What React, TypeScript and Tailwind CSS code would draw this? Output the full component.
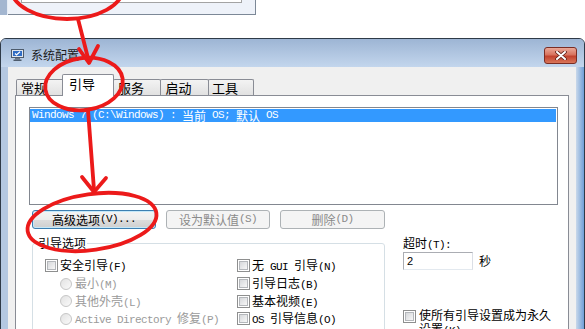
import React from 'react';

const cjk = /[\u3000-\u303f\u4e00-\u9fff\uff00-\uffef]/;

// SimSun-like text: CJK at 12px, latin as 6px-wide mono
const Txt: React.FC<{ s: string }> = ({ s }) => (
  <>
    {s
      .split(/([\u3000-\u303f\u4e00-\u9fff\uff00-\uffef]+)/)
      .filter(Boolean)
      .map((p, i) =>
        cjk.test(p) ? (
          <span key={i}>{p}</span>
        ) : (
          <span key={i} className="font-['Liberation_Mono',monospace] text-[11px] tracking-[-0.6px] leading-none whitespace-pre">
            {p}
          </span>
        )
      )}
  </>
);

const CheckBox: React.FC = () => (
  <span className="flex items-center justify-center w-[13px] h-[13px] shrink-0 border border-[#8e8f8f] bg-white">
    <span className="w-[9px] h-[9px] border border-[#b4b7bb] bg-gradient-to-br from-[#d6d8db] to-[#f7f7f7]" />
  </span>
);

const Radio: React.FC = () => (
  <span className="w-[12px] h-[12px] shrink-0 rounded-full border border-[#c6c6c6] bg-gradient-to-br from-[#e2e2e2] to-[#fafafa]" />
);

const tabs = [
  { label: '常规', w: 'w-[48px]', active: false },
  { label: '引导', w: 'w-[52px]', active: true },
  { label: '服务', w: 'w-[48px]', active: false },
  { label: '启动', w: 'w-[49px]', active: false },
  { label: '工具', w: 'w-[46px]', active: false },
];

export default function App() {
  return (
    <div className="relative w-[585px] h-[329px] overflow-hidden bg-white font-['Noto_Sans_CJK_SC',sans-serif] text-[12px] text-black">
      {/* fragment of the previous dialog */}
      <div className="flex h-[15px]">
        <div className="w-[8px] bg-[#a3b6d0] border-r border-[#e6ecf5]" />
        <div className="w-[248px] bg-[#eef2f9] border-b border-r border-[#7c8897]">
          <div className="ml-[13px] w-[221px] h-[3px] bg-white border-x border-b border-[#a3a3a3]" />
        </div>
      </div>

      {/* System configuration window */}
      <div className="mt-[23px] w-[585px] rounded-t-[6px] border border-[#2e3a48] bg-[#b7cbe4] overflow-hidden">
        <div className="flex items-center h-[28px] pt-[4px] pl-[10px] pr-[7px] bg-[linear-gradient(#9db5d4,#c3d6ed)]">
          <svg width="13" height="12" viewBox="0 0 13 12" className="shrink-0">
            <rect x="0.5" y="0.5" width="12" height="8" fill="#dfe6ef" stroke="#4d5b6c" />
            <rect x="2" y="2" width="9" height="5" fill="#2f6cc4" />
            <path d="M4 4.5 L5.5 6 L9 2.8" stroke="#fff" strokeWidth="1.2" fill="none" />
            <rect x="4" y="9" width="5" height="1.5" fill="#6b7786" />
            <rect x="2.5" y="10.5" width="8" height="1.5" fill="#4d5b6c" />
          </svg>
          <span className="ml-[7px] text-[12px] leading-[16px] text-[#1b1b1b]">系统配置</span>
          <div className="ml-auto self-start mt-[4px] flex items-center justify-center w-[33px] h-[17px] rounded-[3px] border border-[#7a2d24] bg-[linear-gradient(#eaa898_0%,#d8735e_45%,#c2422e_55%,#d9765a_100%)]">
            <svg width="12" height="9" viewBox="0 0 12 9">
              <path d="M2 1 L10 8 M10 1 L2 8" stroke="#5e1f16" strokeWidth="3.6" strokeLinecap="round" />
              <path d="M2 1 L10 8 M10 1 L2 8" stroke="#ffffff" strokeWidth="2" strokeLinecap="round" />
            </svg>
          </div>
        </div>

        <div className="flex h-[270px]">
          <div className="w-[7px] bg-[#b4c8e2]" />
          <div className="w-[568px] bg-[#f0f0f0] pt-[7px] px-[7px]">
            {/* tab strip */}
            <div className="flex items-end h-[21px] pl-[1px]">
              {tabs.map((t, i) =>
                t.active ? (
                  <div
                    key={t.label}
                    className={`relative z-10 ${t.w} h-[22px] -mb-px -ml-[2px] flex items-center justify-center pr-[12px] pb-[4px] border-x border-t border-[#898c95] rounded-t-[2px] bg-white text-[13px]`}
                  >
                    {t.label}
                  </div>
                ) : (
                  <div
                    key={t.label}
                    className={`${t.w} h-[16px] ${i > 0 ? '-ml-px' : ''} flex items-center justify-center pr-[12px] border-x border-t border-[#898c95] rounded-t-[2px] bg-[linear-gradient(#f3f3f3,#e1e1e1)] text-[13px]`}
                  >
                    {t.label}
                  </div>
                )
              )}
            </div>

            {/* tab page */}
            <div className="h-[240px] border border-[#898c95] bg-white pt-[11px]">
              <div className="ml-[13px] mr-[10px] h-[98px] border border-[#828790] bg-white pt-px pr-px">
                <div className="flex items-center h-[13px] pl-[2px] bg-[#3399ff] text-white leading-[13px]">
                  <Txt s="Windows 7 (C:\Windows) : 当前 OS; 默认 OS" />
                </div>
              </div>

              <div className="flex mt-[5px] pl-[16px]">
                <div className="flex items-center justify-center w-[124px] h-[19px] rounded-[3px] border border-[#3c7fb1] shadow-[inset_0_0_0_1px_#c4e8f9] bg-[linear-gradient(#f4f4f4_0%,#ececec_50%,#dddddd_51%,#cfcfcf_100%)] leading-[17px]">
                  <Txt s="高级选项(V)..." />
                </div>
                <div className="ml-[10px] flex items-center justify-center w-[104px] h-[19px] rounded-[3px] border border-[#adb2b5] bg-[#f4f4f4] text-[#8a8a8a] leading-[17px]">
                  <Txt s="设为默认值(S)" />
                </div>
                <div className="ml-[10px] flex items-center justify-center w-[105px] h-[19px] rounded-[3px] border border-[#adb2b5] bg-[#f4f4f4] text-[#8a8a8a] leading-[17px]">
                  <Txt s="删除(D)" />
                </div>
              </div>

              <div className="flex mt-[6px] pl-[16px]">
                <fieldset className="w-[353px] h-[110px] border border-[#d5dfe5] rounded-[3px]">
                  <legend className="ml-[4px] px-[1px] leading-[16px]">引导选项</legend>
                  <div className="flex pt-[6px]">
                    <div className="w-[204px] pl-[12px]">
                      <div className="flex items-center h-[17.7px] gap-[2px]">
                        <CheckBox />
                        <span className="leading-[14px]"><Txt s="安全引导(F)" /></span>
                      </div>
                      <div className="flex items-center h-[17.7px] gap-[3px] pl-[15px] text-[#9a9a9a]">
                        <Radio />
                        <span className="leading-[14px]"><Txt s="最小(M)" /></span>
                      </div>
                      <div className="flex items-center h-[17.7px] gap-[3px] pl-[15px] text-[#9a9a9a]">
                        <Radio />
                        <span className="leading-[14px]"><Txt s="其他外壳(L)" /></span>
                      </div>
                      <div className="flex items-center h-[17.7px] gap-[3px] pl-[15px] text-[#9a9a9a]">
                        <Radio />
                        <span className="leading-[14px]"><Txt s="Active Directory 修复(P)" /></span>
                      </div>
                    </div>
                    <div>
                      {['无 GUI 引导(N)', '引导日志(B)', '基本视频(E)', 'OS 引导信息(O)'].map((s) => (
                        <div key={s} className="flex items-center h-[17.7px] gap-[2px]">
                          <CheckBox />
                          <span className="leading-[14px]"><Txt s={s} /></span>
                        </div>
                      ))}
                    </div>
                  </div>
                </fieldset>

                <div className="ml-[18px]">
                  <div className="leading-[16px] h-[16px]"><Txt s="超时(T):" /></div>
                  <div className="flex items-center mt-[1px]">
                    <div className="w-[70px] h-[18px] border border-[#abadb3] border-b-[#e3e9ef] border-r-[#dbdfe6] bg-white pl-[3px] flex items-center leading-[14px]">
                      <span className="font-['Liberation_Sans',sans-serif] text-[11px]">2</span>
                    </div>
                    <span className="ml-[6px] leading-[14px]">秒</span>
                  </div>
                  <div className="flex items-start mt-[38px]">
                    <span className="mt-[2px]"><CheckBox /></span>
                    <span className="ml-[3px] w-[140px] leading-[14px]"><Txt s="使所有引导设置成为永久设置(K)" /></span>
                  </div>
                </div>
              </div>
            </div>
          </div>
          <div className="w-[8px] bg-[linear-gradient(90deg,#c9d8ea,#6f9fd8)]" />
        </div>
      </div>

      {/* red annotations */}
      <svg className="absolute inset-0 pointer-events-none" width="585" height="329" viewBox="0 0 585 329">
        <g fill="none" stroke="#ec1a1a" strokeWidth="3.8" strokeLinecap="round" strokeLinejoin="round">
          <ellipse cx="67" cy="-12" rx="56" ry="31" />
          <path d="M78 19 L89 62" />
          <path d="M79 49 L89 63 L98 46" />
          <ellipse cx="84" cy="84" rx="39" ry="26" transform="rotate(-8 84 84)" />
          <path d="M88 110 L94 190" />
          <path d="M82 177 L94 192 L106 178" />
          <ellipse cx="92" cy="222" rx="65" ry="28" transform="rotate(-8 92 222)" />
        </g>
      </svg>
    </div>
  );
}
